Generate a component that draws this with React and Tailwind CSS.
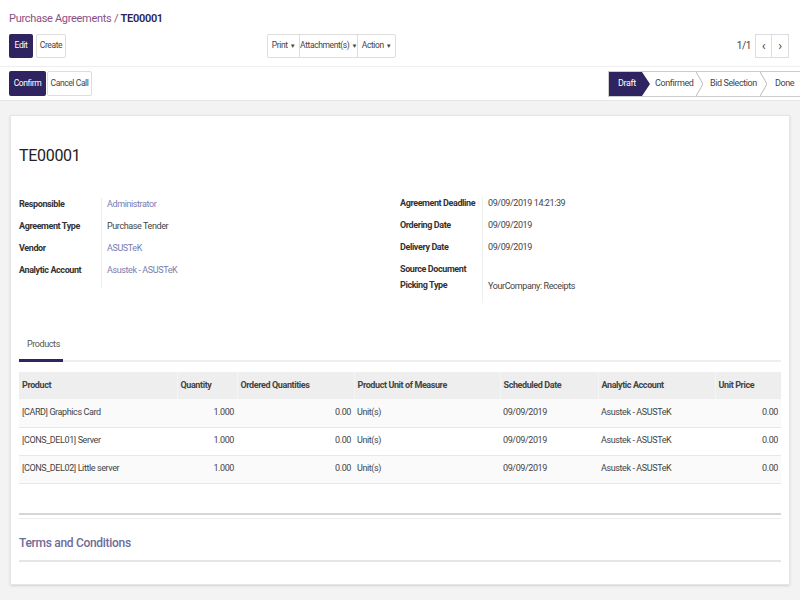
import React from 'react';

const rows = [
  { product: '[CARD] Graphics Card' },
  { product: '[CONS_DEL01] Server' },
  { product: '[CONS_DEL02] Little server' },
];

function Field({ label, value, link, h = 'h-[22px]' }) {
  return (
    <div className={`flex ${h}`}>
      <div className="w-[82px] shrink-0 font-bold text-[#333] whitespace-nowrap">{label}</div>
      <div className={`pl-[5px] border-l border-[#eee] whitespace-nowrap ${link ? 'text-[#7c7bad]' : 'text-[#444]'}`}>{value}</div>
    </div>
  );
}

export default function App() {
  return (
    <div
      className="w-[800px] h-[600px] overflow-hidden bg-[#f3f3f3] text-[9px] tracking-[-0.4px] text-[#444]"
      style={{ fontFamily: 'Roboto, "Noto Sans", sans-serif' }}
    >
      {/* control panel */}
      <div className="bg-white h-[67px] px-[9px] border-b border-[#eee]">
        <div className="pt-[11px] h-[33px] text-[11px] leading-[15px] tracking-[-0.3px] whitespace-nowrap">
          <span className="text-[#8a4f86]">Purchase Agreements</span>
          <span className="text-[#8a4f86]"> / </span>
          <span className="text-[#2d2359] font-semibold">TE00001</span>
        </div>
        <div className="flex items-center h-[25px] whitespace-nowrap text-[8.5px]">
          <button className="h-[24px] w-[24px] bg-[#2f2360] text-white rounded-[2px]">Edit</button>
          <button className="h-[24px] w-[30px] ml-[3px] border border-[#ddd] text-[#444] rounded-[2px]">Create</button>
          <div className="ml-[201px] flex h-[24px] border border-[#ddd] rounded-[2px]">
            <div className="flex items-center justify-center gap-[2px] w-[32px] border-r border-[#ddd]">Print <span className="text-[6px]">▼</span></div>
            <div className="flex items-center justify-center gap-[2px] w-[58px] border-r border-[#ddd]">Attachment(s) <span className="text-[6px]">▼</span></div>
            <div className="flex items-center justify-center gap-[2px] w-[37px]">Action <span className="text-[6px]">▼</span></div>
          </div>
          <div className="ml-auto flex items-center mr-[2px]">
            <span className="mr-[4px] text-[10px]">1/1</span>
            <div className="flex h-[24px] border border-[#ddd]">
              <div className="w-[16px] flex items-center justify-center border-r border-[#ddd] text-[13px]">‹</div>
              <div className="w-[16px] flex items-center justify-center text-[13px]">›</div>
            </div>
          </div>
        </div>
      </div>

      {/* status bar */}
      <div className="bg-white h-[34px] flex items-center justify-between pl-[9px] border-b border-[#e5e5e5] whitespace-nowrap">
        <div className="flex text-[8.5px]">
          <button className="h-[25px] w-[37px] bg-[#2f2360] text-white rounded-[2px]">Confirm</button>
          <button className="h-[25px] w-[45px] ml-[1px] border border-[#ddd] text-[#444] rounded-[2px]">Cancel Call</button>
        </div>
        <div className="flex h-[26px] w-[192px] border border-[#ccc] border-r-0 items-stretch">
          <div className="bg-[#2f2360] text-white flex items-center pl-[9px] w-[33px]">Draft</div>
          <svg width="8" height="24" viewBox="0 0 8 24" className="shrink-0">
            <path d="M0 0 L8 12 L0 24 Z" fill="#2f2360" />
          </svg>
          <div className="flex items-center pl-[5px] w-[46px]">Confirmed</div>
          <svg width="7" height="24" viewBox="0 0 7 24" className="shrink-0">
            <path d="M0 0 L7 12 L0 24" fill="none" stroke="#bbb" />
          </svg>
          <div className="flex items-center pl-[7px] w-[57px]">Bid Selection</div>
          <svg width="7" height="24" viewBox="0 0 7 24" className="shrink-0">
            <path d="M0 0 L7 12 L0 24" fill="none" stroke="#bbb" />
          </svg>
          <div className="flex items-center pl-[8px]">Done</div>
        </div>
      </div>

      {/* sheet */}
      <div className="px-[10px] pt-[14px]">
        <div className="bg-white border border-[#e6e6e6] shadow-sm h-[470px] px-[8px]">
          <div className="pt-[28px] h-[80px] text-[16px] leading-[24px] tracking-[-0.3px] text-[#222]">TE00001</div>

          <div className="flex">
            <div className="w-[381px] pt-[2px]">
              <Field label="Responsible" value="Administrator" link />
              <Field label="Agreement Type" value="Purchase Tender" />
              <Field label="Vendor" value="ASUSTeK" link />
              <Field label="Analytic Account" value="Asustek - ASUSTeK" link h="h-[24px]" />
            </div>
            <div className="flex-1 pt-[1px]">
              <Field label="Agreement Deadline" value="09/09/2019 14:21:39" />
              <Field label="Ordering Date" value="09/09/2019" />
              <Field label="Delivery Date" value="09/09/2019" />
              <Field label="Source Document" value="" h="h-[16px]" />
              <div className="flex h-[24px]">
                <div className="w-[82px] shrink-0 font-bold text-[#333]">Picking Type</div>
                <div className="pl-[5px] pt-[1px] border-l border-[#eee]">YourCompany: Receipts</div>
              </div>
            </div>
          </div>

          {/* tabs */}
          <div className="mt-[35px] relative h-[24px] border-b-2 border-[#eee]">
            <div className="absolute left-0 bottom-[-2px] w-[44px] h-[3px] bg-[#2f2360]" />
            <span className="ml-[8px] text-[#555]">Products</span>
          </div>

          <table className="mt-[10px] w-full border-collapse table-fixed whitespace-nowrap">
            <colgroup>
              <col className="w-[158px]" />
              <col className="w-[60px]" />
              <col className="w-[117px]" />
              <col className="w-[146px]" />
              <col className="w-[98px]" />
              <col className="w-[117px]" />
              <col />
            </colgroup>
            <thead>
              <tr className="bg-[#eee] h-[27px] text-[#444]">
                <th className="text-left font-bold px-[3px]">Product</th>
                <th className="text-left font-bold px-[3px] border-l border-[#f5f5f5]">Quantity</th>
                <th className="text-left font-bold px-[3px] border-l border-[#f5f5f5]">Ordered Quantities</th>
                <th className="text-left font-bold px-[3px] border-l border-[#f5f5f5]">Product Unit of Measure</th>
                <th className="text-left font-bold px-[3px] border-l border-[#f5f5f5]">Scheduled Date</th>
                <th className="text-left font-bold px-[3px] border-l border-[#f5f5f5]">Analytic Account</th>
                <th className="text-left font-bold px-[3px] border-l border-[#f5f5f5]">Unit Price</th>
              </tr>
            </thead>
            <tbody>
              {rows.map((r, i) => (
                <tr key={i} className={`h-[28px] border-b border-[#e8e8e8] ${i % 2 === 0 ? 'bg-[#fafafa]' : 'bg-white'}`}>
                  <td className="px-[3px]">{r.product}</td>
                  <td className="px-[3px] text-right">1.000</td>
                  <td className="px-[3px] text-right">0.00</td>
                  <td className="px-[3px]">Unit(s)</td>
                  <td className="px-[3px]">09/09/2019</td>
                  <td className="px-[3px]">Asustek - ASUSTeK</td>
                  <td className="px-[3px] text-right">0.00</td>
                </tr>
              ))}
            </tbody>
          </table>

          <div className="mt-[29px] h-[2px] bg-[#d5d5d5]" />
          <div className="mt-[3px] h-[1px] bg-[#eee]" />
          <div className="pt-[15px] h-[41px] text-[12px] font-medium tracking-[-0.3px] text-[#6e6b99]">Terms and Conditions</div>
          <div className="h-[2px] bg-[#e5e5e5]" />
        </div>
      </div>
    </div>
  );
}
